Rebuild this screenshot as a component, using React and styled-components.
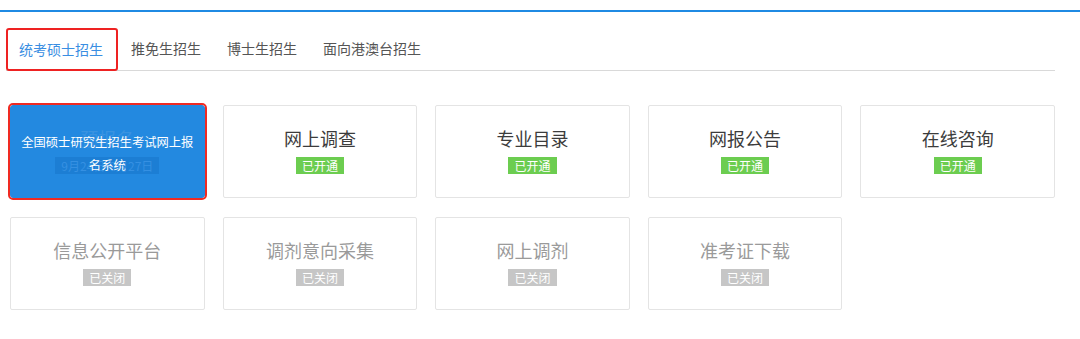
import React from "react";
import styled, { createGlobalStyle } from "styled-components";

const GlobalStyle = createGlobalStyle`
  html, body { margin: 0; padding: 0; background: #fff; }
  body {
    font-family: "Noto Sans CJK SC", "Noto Sans", "Liberation Sans", sans-serif;
  }
`;

const Page = styled.div`
  padding-top: 10px;
  width: 1080px;
  height: 339px;
  box-sizing: border-box;
`;

const Main = styled.div`
  border-top: 2px solid #1f8ae3;
  padding: 16px 25px 0 6px;
`;

const TabBar = styled.div`
  display: flex;
  align-items: flex-start;
  border-bottom: 1px solid #d9d9d9;
  height: 42px;
`;

const Tab = styled.div`
  box-sizing: border-box;
  height: ${(p) => (p.$active ? "43px" : "42px")};
  line-height: ${(p) => (p.$active ? "38px" : "40px")};
  font-size: 14px;
  white-space: nowrap;
  color: ${(p) => (p.$active ? "#3a8ee2" : "#555")};
  padding: ${(p) => (p.$active ? "0 13px 0 11px" : "0 13px")};
  border: ${(p) => (p.$active ? "2px solid #ee2222" : "none")};
  border-radius: 3px;
  position: relative;
  z-index: 1;
`;

const Grid = styled.div`
  margin: 34px 0 0 4px;
  display: grid;
  grid-template-columns: repeat(5, 1fr);
  column-gap: 18px;
  row-gap: 19px;
`;

const Card = styled.div`
  position: relative;
  box-sizing: border-box;
  height: 93px;
  border: 1px solid ${(p) => (p.$featured ? "#2389e0" : "#e4e4e4")};
  border-radius: 2px;
  background: ${(p) => (p.$featured ? "#2389e0" : "#fff")};
  display: flex;
  flex-direction: column;
  align-items: center;
  justify-content: center;
  ${(p) =>
    p.$featured
      ? "outline: 2px solid #f02a22; outline-offset: 0px; border-radius: 3px;"
      : ""}
`;

const Title = styled.div`
  font-size: 18px;
  line-height: 24px;
  margin-top: -4px;
  color: ${(p) =>
    p.$featured ? "#3a93e0" : p.$open ? "#3c3c3c" : "#9a9a9a"};
  white-space: nowrap;
`;

const Badge = styled.span`
  margin-top: 7px;
  height: 17px;
  line-height: 17px;
  padding: 0 6px;
  font-size: 12px;
  color: ${(p) => (p.$featured ? "#3590e2" : "#fff")};
  background: ${(p) =>
    p.$featured ? "#1c7ed4" : p.$open ? "#6ccd50" : "#c6c6c6"};
  white-space: nowrap;
`;

const Overlay = styled.div`
  position: absolute;
  inset: 0;
  display: flex;
  align-items: center;
  justify-content: center;
  padding: 4px 8px 0;
  box-sizing: border-box;
  text-align: center;
  color: #fff;
  font-size: 12.3px;
  line-height: 23px;
`;

const tabs = ["统考硕士招生", "推免生招生", "博士生招生", "面向港澳台招生"];

const items = [
  { title: "网上调查", open: true },
  { title: "专业目录", open: true },
  { title: "网报公告", open: true },
  { title: "在线咨询", open: true },
  { title: "信息公开平台", open: false },
  { title: "调剂意向采集", open: false },
  { title: "网上调剂", open: false },
  { title: "准考证下载", open: false },
];

export default function App() {
  return (
    <>
      <GlobalStyle />
      <Page>
        <Main>
          <TabBar>
            {tabs.map((t, i) => (
              <Tab key={t} $active={i === 0}>
                {t}
              </Tab>
            ))}
          </TabBar>
          <Grid>
            <Card $featured>
              <Title $featured>预报名</Title>
              <Badge $featured>9月24日-9月27日</Badge>
              <Overlay>全国硕士研究生招生考试网上报名系统</Overlay>
            </Card>
            {items.map((it) => (
              <Card key={it.title}>
                <Title $open={it.open}>{it.title}</Title>
                <Badge $open={it.open}>{it.open ? "已开通" : "已关闭"}</Badge>
              </Card>
            ))}
          </Grid>
        </Main>
      </Page>
    </>
  );
}
